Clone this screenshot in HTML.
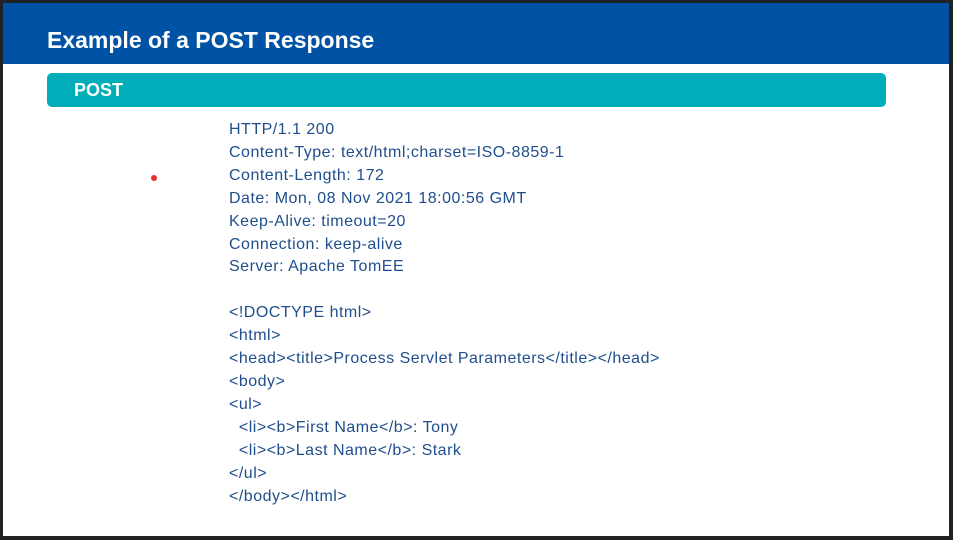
<!DOCTYPE html>
<html><head><meta charset="utf-8"><style>
html,body{margin:0;padding:0;}
body{width:953px;height:540px;background:#202124;position:relative;overflow:hidden;font-family:"Liberation Sans",sans-serif;}
.slide{position:absolute;left:3px;top:3px;width:946px;height:533px;background:#fff;}
.hdr{position:absolute;left:0;top:0;width:946px;height:61px;background:#0052a5;}
.hdr h1{margin:0;position:absolute;left:44px;top:24px;color:#fff;font-size:23px;font-weight:bold;}
.bar{position:absolute;left:44px;top:70px;width:839px;height:34px;background:#00adb8;border-radius:5px;}
.bar span{position:absolute;left:27px;top:7px;color:#fff;font-weight:bold;font-size:18px;}
.txt{position:absolute;left:226px;top:116px;color:#1f4e8c;font-size:16px;letter-spacing:0.5px;line-height:22.9px;white-space:pre;}
.dot{position:absolute;left:148px;top:172px;width:6px;height:6px;border-radius:50%;background:#e53030;}
</style></head><body>
<div class="slide">
<div class="hdr"><h1>Example of a POST Response</h1></div>
<div class="bar"><span>POST</span></div>
<div class="dot"></div>
<div class="txt">HTTP/1.1 200
Content-Type: text/html;charset=ISO-8859-1
Content-Length: 172
Date: Mon, 08 Nov 2021 18:00:56 GMT
Keep-Alive: timeout=20
Connection: keep-alive
Server: Apache TomEE

&lt;!DOCTYPE html&gt;
&lt;html&gt;
&lt;head&gt;&lt;title&gt;Process Servlet Parameters&lt;/title&gt;&lt;/head&gt;
&lt;body&gt;
&lt;ul&gt;
  &lt;li&gt;&lt;b&gt;First Name&lt;/b&gt;: Tony
  &lt;li&gt;&lt;b&gt;Last Name&lt;/b&gt;: Stark
&lt;/ul&gt;
&lt;/body&gt;&lt;/html&gt;</div>
</div>
</body></html>
